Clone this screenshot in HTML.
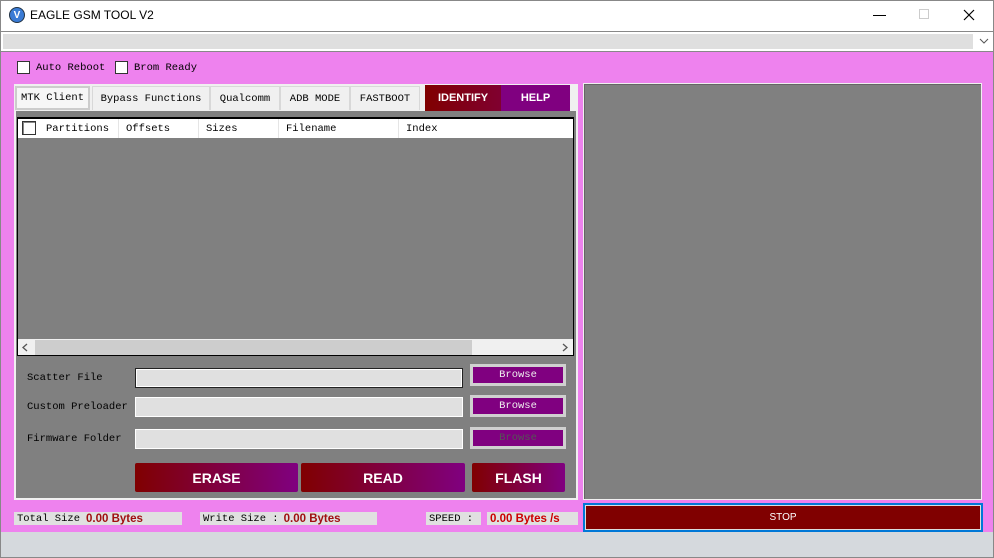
<!DOCTYPE html>
<html><head><meta charset="utf-8"><style>
*{margin:0;padding:0;box-sizing:border-box}
body{width:994px;height:558px;position:relative;overflow:hidden;background:#d5d9dd;font-family:"Liberation Mono",monospace;font-size:10.5px;color:#000}
.a{position:absolute}
.s{font-family:"Liberation Sans",sans-serif}
.grad{background:linear-gradient(90deg,#800000,#800080);color:#fff;font-family:"Liberation Sans",sans-serif;font-weight:bold;display:flex;align-items:center;justify-content:center}
.tab{position:absolute;top:86px;height:24px;background:#f0f0f0;border:1px solid #d8d8d8;border-bottom:none;display:flex;align-items:center;justify-content:center;font-size:10.5px}
.cb{position:absolute;width:13px;height:13px;background:#fff;border:1px solid #333}
.inp{position:absolute;left:135px;width:328px;height:20px;background:#e0e0e0;border:1px solid #fff}
.br{position:absolute;left:470px;width:96px;height:22px;background:#800080;border:3px solid #d0d0d0;color:#eee;display:flex;align-items:center;justify-content:center;font-size:10.5px}
.st{position:absolute;top:512px;height:13px;background:#e0e0e0;display:flex;align-items:center;padding-left:3px;font-size:10.5px}
.val{color:#a01010;font-family:"Liberation Sans",sans-serif;font-weight:bold;font-size:11.5px;margin-left:6px}
</style></head><body>
<div class="a" style="left:0;top:0;width:994px;height:558px;border:1px solid #888"></div>
<div class="a" style="left:1px;top:1px;width:992px;height:30px;background:#fff"></div>
<div class="a" style="left:9px;top:7px;width:16px;height:16px;border-radius:50%;background:#3a7bd5;border:1px solid #234;color:#fff;font:bold 10px 'Liberation Sans';display:flex;align-items:center;justify-content:center">V</div>
<div class="a s" style="left:30px;top:8px;font-size:12px">EAGLE GSM TOOL V2</div>
<div class="a" style="left:873px;top:15px;width:13px;height:1px;background:#000"></div>
<div class="a" style="left:919px;top:9px;width:10px;height:10px;border:1px solid #ccc"></div>
<svg class="a" style="left:963px;top:9px" width="12" height="12"><path d="M1 1L11 11M11 1L1 11" stroke="#000" stroke-width="1.2"/></svg>
<div class="a" style="left:1px;top:31px;width:992px;height:21px;background:#fff;border-top:1px solid #888;border-bottom:1px solid #888"></div>
<div class="a" style="left:3px;top:34px;width:970px;height:15px;background:#dfdfdf"></div>
<svg class="a" style="left:979px;top:38px" width="10" height="6"><path d="M1 1L5 5L9 1" stroke="#555" fill="none"/></svg>
<div class="a" style="left:1px;top:52px;width:992px;height:480px;background:#ee82ee"></div>
<div class="cb" style="left:17px;top:61px"></div><div class="a" style="left:36px;top:62px">Auto Reboot</div>
<div class="cb" style="left:115px;top:61px"></div><div class="a" style="left:134px;top:62px">Brom Ready</div>
<div class="a" style="left:14px;top:84px;width:564px;height:416px;background:#f0f0f0"></div>
<div class="tab" style="left:15px;width:75px;border:2px solid #ccc;background:#f6f6f6">MTK Client</div>
<div class="tab" style="left:92px;width:118px">Bypass Functions</div>
<div class="tab" style="left:210px;width:70px">Qualcomm</div>
<div class="tab" style="left:280px;width:70px">ADB MODE</div>
<div class="tab" style="left:350px;width:70px">FASTBOOT</div>
<div class="a grad" style="left:425px;top:85px;width:76px;height:26px;font-size:11px;background:linear-gradient(90deg,#800000,#800030)">IDENTIFY</div>
<div class="a grad" style="left:501px;top:85px;width:69px;height:26px;font-size:11px;background:#800080">HELP</div>
<div class="a" style="left:16px;top:111px;width:560px;height:387px;background:#808080"></div>
<div class="a" style="left:17px;top:117px;width:557px;height:239px;border:1px solid #000;border-width:2px 1px 1px 1px;background:#808080"></div>
<div class="a" style="left:18px;top:119px;width:555px;height:19px;background:#fff"></div>
<div class="a" style="left:22px;top:121px;width:14px;height:14px;border:1px solid #333;box-shadow:inset 1px 1px 0 #888"></div>
<div class="a" style="left:46px;top:123px">Partitions</div>
<div class="a" style="left:118px;top:119px;width:1px;height:19px;background:#e5e5e5"></div>
<div class="a" style="left:126px;top:123px">Offsets</div>
<div class="a" style="left:198px;top:119px;width:1px;height:19px;background:#e5e5e5"></div>
<div class="a" style="left:206px;top:123px">Sizes</div>
<div class="a" style="left:278px;top:119px;width:1px;height:19px;background:#e5e5e5"></div>
<div class="a" style="left:286px;top:123px">Filename</div>
<div class="a" style="left:398px;top:119px;width:1px;height:19px;background:#e5e5e5"></div>
<div class="a" style="left:406px;top:123px">Index</div>
<div class="a" style="left:18px;top:339px;width:555px;height:16px;background:#f0f0f0"></div>
<div class="a" style="left:35px;top:340px;width:437px;height:15px;background:#cdcdcd"></div>
<svg class="a" style="left:22px;top:343px" width="6" height="9"><path d="M5 1L1 4.5L5 8" stroke="#555" fill="none" stroke-width="1.3"/></svg>
<svg class="a" style="left:562px;top:343px" width="6" height="9"><path d="M1 1L5 4.5L1 8" stroke="#555" fill="none" stroke-width="1.3"/></svg>
<div class="a" style="left:27px;top:372px">Scatter File</div>
<div class="a" style="left:27px;top:401px">Custom Preloader</div>
<div class="a" style="left:27px;top:433px">Firmware Folder</div>
<div class="inp" style="top:368px;border:1px solid #222;box-shadow:inset 0 0 0 1px #fff"></div>
<div class="inp" style="top:397px"></div>
<div class="inp" style="top:429px"></div>
<div class="br" style="top:364px">Browse</div>
<div class="br" style="top:395px">Browse</div>
<div class="br" style="top:427px;color:#555">Browse</div>
<div class="a grad" style="left:135px;top:463px;width:163px;height:29px;font-size:14px;border-radius:2px">ERASE</div>
<div class="a grad" style="left:301px;top:463px;width:164px;height:29px;font-size:14px;border-radius:2px">READ</div>
<div class="a grad" style="left:472px;top:463px;width:93px;height:29px;font-size:14px;border-radius:2px">FLASH</div>
<div class="st" style="left:14px;width:168px">Total Size<span class="val">0.00 Bytes</span></div>
<div class="st" style="left:200px;width:177px">Write Size :<span class="val" style="margin-left:5px">0.00 Bytes</span></div>
<div class="st" style="left:426px;width:55px">SPEED :</div>
<div class="st" style="left:487px;width:91px"><span class="val" style="margin-left:0;color:#c00">0.00 Bytes /s</span></div>
<div class="a" style="left:583px;top:83px;width:399px;height:417px;background:#808080;border:1px solid #f0f0f0;box-shadow:inset 1px 1px 0 #666"></div>
<div class="a s" style="left:583px;top:503px;width:400px;height:29px;border:2px solid #0078d7;background:#800000;box-shadow:inset 0 0 0 1px #ddd;color:#fff;font-size:10px;display:flex;align-items:center;justify-content:center">STOP</div>
</body></html>
